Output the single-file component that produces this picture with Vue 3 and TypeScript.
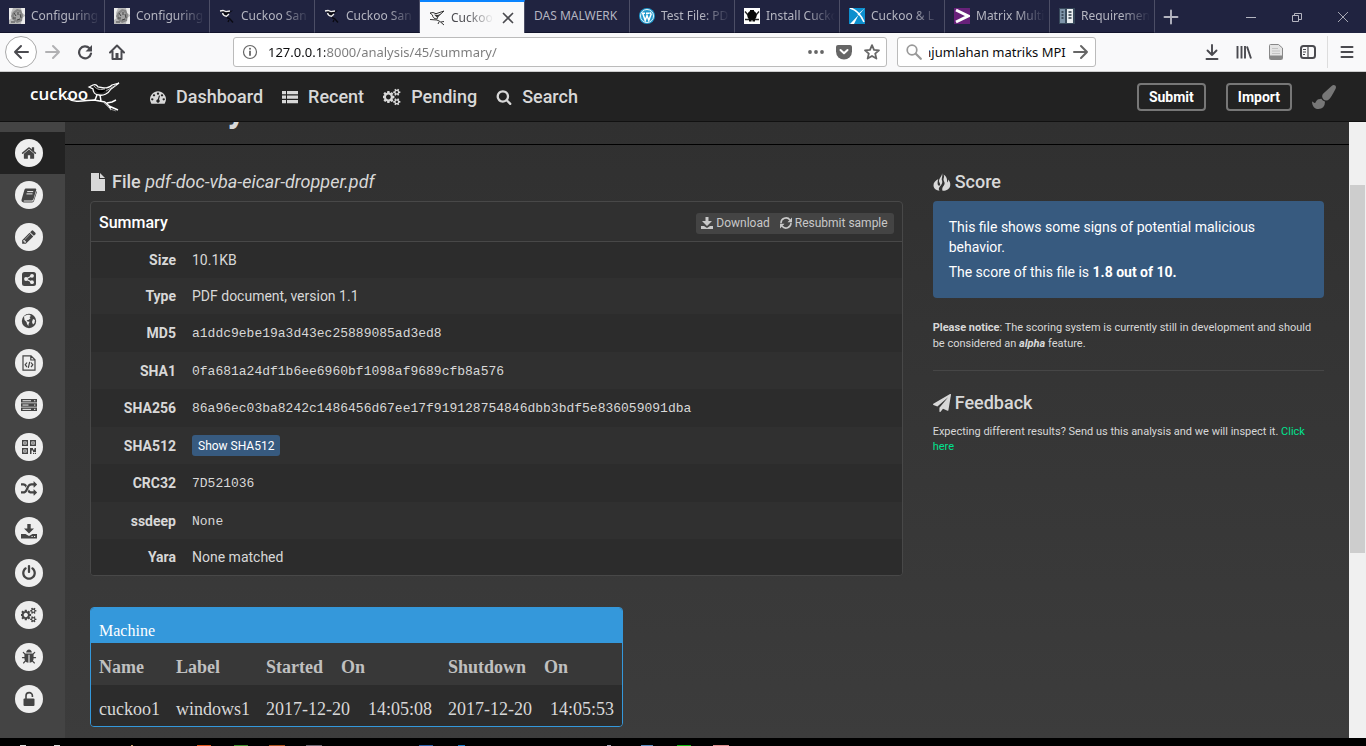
<script setup lang="ts">
import { h, onMounted, ref } from 'vue'

interface Glyph { box: string; body: string }

const fa = (d: string, box = '0 0 1792 1792'): Glyph => ({ box, body: `<path d="${d}"/>` })
const art = (body: string, box = '0 0 16 16'): Glyph => ({ box, body })

const cogs = 'M832 896q0-106-75-181t-181-75-181 75-75 181 75 181 181 75 181-75 75-181zm768 512q0-52-38-90t-90-38-90 38-38 90q0 53 37.5 90.5t90.5 37.5 90.5-37.5 37.5-90.5zm0-1024q0-52-38-90t-90-38-90 38-38 90q0 53 37.5 90.5t90.5 37.5 90.5-37.5 37.5-90.5zm-384 421v185q0 10-7 19.5t-16 10.5l-155 24q-11 35-32 76 34 48 90 115 7 11 7 20 0 12-7 19-23 30-82.5 89.5t-78.5 59.5q-11 0-21-7l-115-90q-37 19-77 31-11 108-23 155-7 24-30 24h-186q-11 0-20-7.5t-10-17.5l-23-153q-34-10-75-31l-118 89q-7 7-20 7-11 0-21-8-144-133-144-160 0-9 7-19 10-14 41-53t47-61q-23-44-35-82l-152-24q-10-1-17-9.5t-7-19.5v-185q0-10 7-19.5t16-10.5l155-24q11-35 32-76-34-48-90-115-7-11-7-20 0-12 7-20 22-30 82-89t79-59q11 0 21 7l115 90q34-18 77-32 11-108 23-154 7-24 30-24h186q11 0 20 7.5t10 17.5l23 153q34 10 75 31l118-89q8-7 20-7 11 0 21 8 144 133 144 160 0 8-7 19-12 16-42 54t-45 60q23 48 34 82l152 23q10 2 17 10.5t7 19.5zm640 533v140q0 16-149 31-12 27-30 52 51 113 51 138 0 4-4 7-122 71-124 71-8 0-46-47t-52-68q-20 2-30 2t-30-2q-14 21-52 68t-46 47q-2 0-124-71-4-3-4-7 0-25 51-138-18-25-30-52-149-15-149-31v-140q0-16 149-31 13-29 30-52-51-113-51-138 0-4 4-7 4-2 35-20t59-34 30-16q8 0 46 46.5t52 67.5q20-2 30-2t30 2q51-71 92-112l6-2q4 0 124 70 4 3 4 7 0 25-51 138 17 23 30 52 149 15 149 31zm0-1024v140q0 16-149 31-12 27-30 52 51 113 51 138 0 4-4 7-122 71-124 71-8 0-46-47t-52-68q-20 2-30 2t-30-2q-14 21-52 68t-46 47q-2 0-124-71-4-3-4-7 0-25 51-138-18-25-30-52-149-15-149-31v-140q0-16 149-31 13-29 30-52-51-113-51-138 0-4 4-7 4-2 35-20t59-34 30-16q8 0 46 46.5t52 67.5q20-2 30-2t30 2q51-71 92-112l6-2q4 0 124 70 4 3 4 7 0 25-51 138 17 23 30 52 149 15 149 31z'

const glyphs: Record<string, Glyph> = {
  home: fa('M1472 992v480q0 26-19 45t-45 19h-384v-384h-256v384h-384q-26 0-45-19t-19-45v-480q0-1 .5-3t.5-3l575-474 575 474q1 2 1 6zm223-69l-62 74q-8 9-21 11h-3q-13 0-21-7l-692-577-692 577q-12 8-24 7-13-2-21-11l-62-74q-8-10-7-23.5t11-21.5l719-599q32-26 76-26t76 26l244 204v-195q0-14 9-23t23-9h192q14 0 23 9t9 23v408l219 182q10 8 11 21.5t-7 23.5z'),
  book: art('<path d="M5.2 1.5H14c1 0 1.500.6 1.200 1.500l-2.700 9c-.3.900-1 1.500-2 1.500H3.200c-.7 0-.9.900-.2.900h8.100c.8 0 1.200-.3 1.400-1L15.500 4c.5.400.500 1 .3 1.600l-2.700 8.200c-.3 1-1 1.600-2 1.600H2.600C1 15.400.2 14 .6 12.600L3.300 3.200C3.600 2.200 4.200 1.500 5.200 1.500z"/><path d="M6.200 4.600h6M5.500 6.900h6" stroke="#eee" stroke-width="1"/>'),
  pencil: fa('M491 1536l91-91-235-235-91 91v107h128v128h107zm523-928q0-22-22-22-10 0-17 7l-542 542q-7 7-7 17 0 22 22 22 10 0 17-7l542-542q7-7 7-17zm-54-192l416 416-832 832h-416v-416zm683 96q0 53-37 90l-166 166-416-416 166-165q36-38 90-38 53 0 91 38l235 234q37 39 37 91z'),
  share: art('<rect x="1" y="1" width="14" height="14" rx="2.500"/><path d="M11 4.700L5 8l6 3.300" stroke="#eee" stroke-width="1.200" fill="none"/><circle cx="11" cy="4.800" r="1.900" fill="#eee"/><circle cx="5" cy="8" r="1.900" fill="#eee"/><circle cx="11" cy="11.200" r="1.900" fill="#eee"/>'),
  globe: art('<circle cx="8" cy="8" r="7.200"/><path d="M3 3.500C4.500 2 6.500 1.500 8.500 1.700L10 3 8.500 4l1 1.200L7.500 7 5.600 7.200l1 1.300 2 .3-1 2.200L7.400 13 6 11 5.500 9 3.500 7z" fill="#eee"/><path d="M12 6l2 1-.5 3L12 11.500 11 9z" fill="#eee"/>'),
  code: art('<path d="M2 .8h8L14 4.800v10.400H2zM9.800 1v4H14M6 7.500L4.200 9.800 6 12M10 7.500l1.800 2.300L10 12M8.700 6.800l-1.400 6" fill="none" stroke="currentColor" stroke-width="1.200"/>'),
  server: art('<path d="M0 2h16v3.500H0zM0 6.300h16v3.500H0zM0 10.600h16v3.500H0z"/><path d="M1.500 3.750H10M1.500 8.050h6M1.500 12.350H10M13 3.750h1.400M13 8.050h1.400M13 12.350h1.400" stroke="#eee" stroke-width="1"/>'),
  qr: art('<path d="M1.700 1.700h4.600v4.600H1.700zM9.700 1.700h4.600v4.600H9.700zM1.700 9.700h4.600v4.600H1.700z" fill="none" stroke="currentColor" stroke-width="1.400"/><path d="M3.300 3.300h1.400v1.400H3.300zM11.300 3.300h1.400v1.400h-1.400zM3.300 11.300h1.400v1.400H3.300zM9 9h3v1.500h1.500V9H15v4h-3v-1.500h-1.500V15H9zM12 13.700h1.200V15H12zM13.900 13.700H15V15h-1.100z"/>'),
  random: fa('M666 481q-60 92-137 273-22-45-37-72.5t-40.500-63.500-51-56.500-63-35-81.500-14.500h-224q-14 0-23-9t-9-23v-192q0-14 9-23t23-9h224q250 0 410 225zm1126 799q0 14-9 23l-320 320q-9 9-23 9-13 0-22.500-9.500t-9.500-22.500v-192q-32 0-85 .5t-81 1-73-1-71-5-64-10.500-63-18.500-58-28.500-59-40-55-53.500-56-69.500q59-93 136-273 22 45 37 72.500t40.500 63.500 51 56.500 63 35 81.500 14.500h256v-192q0-14 9-23t23-9q12 0 24 10l319 319q9 9 9 23zm0-896q0 14-9 23l-320 320q-9 9-23 9-13 0-22.500-9.500t-9.500-22.500v-192h-256q-48 0-87 15t-69 45-51 61.500-45 77.500q-32 62-78 171-29 66-49.500 111t-54 105-64 100-74 83-90 68.500-106.500 42-128 16.500h-224q-14 0-23-9t-9-23v-192q0-14 9-23t23-9h224q48 0 87-15t69-45 51-61.500 45-77.500q32-62 78-171 29-66 49.500-111t54-105 64-100 74-83 90-68.500 106.500-42 128-16.500h256v-192q0-14 9-23t23-9q12 0 24 10l319 319q9 9 9 23z'),
  tray: art('<path d="M6.300 1h3.400v4.500h3.300L8 10.500 3 5.500h3.300zM0 11h4.500L8 13l3.500-2H16v4.500H0z"/><path d="M10.500 13.500h1.200M13 13.500h1.200" stroke="#eee" stroke-width="1"/>'),
  power: fa('M1664 896q0 156-61 298t-164 245-245 164-298 61-298-61-245-164-164-245-61-298q0-182 80.500-343t226.500-270q43-32 95.500-25t83.500 50q32 42 24.500 94.500t-49.500 84.500q-98 74-151.500 181t-53.500 228q0 104 40.500 198.500t109.500 163.500 163.500 109.500 198.500 40.500 198.500-40.500 163.500-109.500 109.500-163.500 40.500-198.500q0-121-53.500-228t-151.500-181q-42-32-49.500-84.500t24.500-94.500q31-43 84-50t95 25q146 109 226.500 270t80.500 343zm-640-768v640q0 52-38 90t-90 38-90-38-38-90v-640q0-52 38-90t90-38 90 38 38 90z'),
  cogs: fa(cogs, '0 0 1920 1792'),
  bug: fa('M1696 960q0 26-19 45t-45 19h-224q0 171-67 290l208 209q19 19 19 45t-19 45q-18 19-45 19t-45-19l-198-197q-5 5-15 13t-42 28.500-65 36.500-82 29-97 13v-896h-128v896q-51 0-101.500-13.500t-87-33-66-39-43.500-32.500l-15-14-183 207q-20 21-48 21-24 0-43-16-19-18-20.500-44.500t15.500-46.500l202-227q-58-114-58-274h-224q-26 0-45-19t-19-45 19-45 45-19h224v-294l-173-173q-19-19-19-45t19-45 45-19 45 19l173 173h844l173-173q19-19 45-19t45 19 19 45-19 45l-173 173v294h224q26 0 45 19t19 45zm-480-576h-640q0-133 93.500-226.500t226.500-93.500 226.500 93.500 93.500 226.500z'),
  unlock: art('<rect x="2.500" y="7.500" width="11" height="7.500" rx="1"/><path d="M5 8V4.800a3.200 3.200 0 0 1 6.400 0V6" fill="none" stroke="currentColor" stroke-width="1.600"/>'),
  dashboard: fa('M384 1152q0-53-37.500-90.500t-90.500-37.500-90.500 37.500-37.500 90.500 37.500 90.500 90.500 37.500 90.500-37.500 37.500-90.500zm192-448q0-53-37.500-90.500t-90.500-37.500-90.500 37.500-37.500 90.500 37.500 90.500 90.500 37.500 90.500-37.500 37.500-90.500zm428 481l101-382q6-26-7.500-48.500t-38.500-29.500-48 6.500-30 39.500l-101 382q-60 5-107 43.500t-63 98.500q-20 77 20 146t117 89 146-20 89-117q16-60-6-117t-72-91zm660-33q0-53-37.500-90.500t-90.500-37.500-90.500 37.500-37.500 90.500 37.500 90.500 90.500 37.500 90.500-37.500 37.500-90.500zm-640-640q0-53-37.500-90.500t-90.500-37.500-90.500 37.500-37.500 90.500 37.500 90.500 90.500 37.500 90.500-37.500 37.500-90.500zm448 192q0-53-37.500-90.500t-90.500-37.500-90.500 37.500-37.500 90.500 37.500 90.500 90.500 37.500 90.500-37.500 37.500-90.500zm320 448q0 261-141 483-19 29-54 29h-1402q-35 0-54-29-141-221-141-483 0-182 71-348t191-286 286-191 348-71 348 71 286 191 191 286 71 348z'),
  list: art('<path d="M0 2h4v3.200H0zM5 2h11v3.200H5zM0 6.500h4v3.200H0zM5 6.500h11v3.200H5zM0 11h4v3.200H0zM5 11h11v3.200H5z"/>'),
  search: fa('M1216 832q0-185-131.500-316.500t-316.500-131.500-316.500 131.500-131.500 316.500 131.500 316.500 316.500 131.500 316.500-131.500 131.500-316.500zm512 832q0 52-38 90t-90 38q-54 0-90-38l-343-342q-179 124-399 124-143 0-273.500-55.500t-225-150-150-225-55.500-273.500 55.500-273.500 150-225 225-150 273.500-55.500 273.500 55.500 225 150 150 225 55.500 273.500q0 220-124 399l343 343q37 37 37 90z'),
  brush: fa('M1615 0q70 0 122.500 46.500t52.500 116.500q0 63-45 151-332 629-465 752-97 91-218 91-126 0-216.500-92.500t-90.500-219.500q0-128 92-212l638-579q59-54 130-54zm-909 1034q39 76 106.500 130t150.500 76l1 71q4 213-129.500 347t-348.500 134q-123 0-218-46.500t-152.500-127.500-86.500-183-29-220q7 5 41 30t62 44.500 59 36.500 46 17q41 0 55-37 25-66 57.500-112.500t69.500-76 88-47.500 103-25.500 125-10.500z'),
  file: art('<path d="M0 0h8v6h6v12H0z"/><path d="M9 0l5 5H9z"/>', '0 0 14 18'),
  fire: art('<path d="M8.500 0C9 3 5.500 5 5.500 8c0 1.500 1.200 2.300 1.200 3.600 0 .9-.7 1.400-1.400 1.100C4 12.200 4 10.500 4.200 8.500c.1-1 .3-1.800.6-2.500C2 7.500 0 9.500 0 12.200 0 15.500 3 17.500 6 17.700c-1.300-1.700-.6-3.200.8-4.800 1.500-1.700 2.600-3.300 1.700-5.400C7.700 5.500 9.500 3.500 8.500 0z"/><path d="M10 1.500c1.500 2.500-.6 4.200.3 6.200.7 1.500 1.500 3-.1 5-1.500 1.800-1.800 3.300-1.200 5 3.500.3 7-1.500 7.700-5 .6-3-1-4.500-1.900-6.200-.1 1.400-.4 2.400-1.300 3C14 6.500 13 3 10 1.500z"/>', '0 0 17 18'),
  plane: fa('M1764 11q33 24 27 64l-256 1536q-5 29-32 45-14 8-31 8-11 0-24-5l-453-185-242 295q-18 23-49 23-13 0-22-4-19-7-30.500-23.500t-11.500-36.500v-349l864-1059-1069 925-395-162q-37-14-40-55-2-40 32-59l1664-960q15-9 32-9 20 0 36 11z'),
  save: art('<path d="M4.500 0h3v4H11L6 9 1 4h3.500zM0 9h3l3 2 3-2h3v3H0z"/>', '0 0 12 12'),
  refresh: art('<path d="M1 6.200A5 5 0 0 1 10 3M11 5.800A5 5 0 0 1 2 9" fill="none" stroke="currentColor" stroke-width="1.600"/><path d="M12 .5v4.700H7.500zM0 11.500V6.800h4.500z"/>', '0 0 12 12'),
  back: art('<path d="M15 8H2M8 2L2 8l6 6" fill="none" stroke="currentColor" stroke-width="2" stroke-linecap="round" stroke-linejoin="round"/>'),
  forward: art('<path d="M1 8h13M8 2l6 6-6 6" fill="none" stroke="currentColor" stroke-width="2" stroke-linecap="round" stroke-linejoin="round"/>'),
  reload: art('<path d="M12.500 4.200A6 6 0 1 0 14 9.500" fill="none" stroke="currentColor" stroke-width="2.200" stroke-linecap="round"/><path d="M15 1v6.500H8.500z"/>'),
  house: art('<path d="M1 8.500L8 1.500l7 7M3.500 7v8h9V7" fill="none" stroke="currentColor" stroke-width="2" stroke-linecap="round" stroke-linejoin="round"/><path d="M6.500 9h3v6h-3z"/>'),
  info: art('<circle cx="8" cy="8" r="6.500" fill="none" stroke="currentColor" stroke-width="1.200"/><circle cx="8" cy="4.800" r="1"/><path d="M7.100 6.800h1.800v5H7.100z"/>'),
  dots: art('<circle cx="2" cy="8" r="1.900"/><circle cx="8" cy="8" r="1.900"/><circle cx="14" cy="8" r="1.900"/>'),
  pocket: art('<path d="M2 1h12a2 2 0 0 1 2 2v4.500a8 8 0 0 1-16 0V3a2 2 0 0 1 2-2z"/><path d="M4.500 6L8 9.300 11.500 6" fill="none" stroke="#fff" stroke-width="2" stroke-linecap="round" stroke-linejoin="round"/>'),
  star: art('<path d="M8 1.200l2 4.700 5 .4-3.800 3.300 1.200 5L8 12l-4.400 2.600 1.200-5L1 6.300l5-.4z" fill="none" stroke="currentColor" stroke-width="1.800" stroke-linejoin="round"/>'),
  lens: art('<circle cx="6" cy="6" r="4.800" fill="none" stroke="currentColor" stroke-width="1.700"/><path d="M9.800 9.800l5 5" stroke="currentColor" stroke-width="2.200" stroke-linecap="round"/>'),
  fetch: art('<path d="M8 1v10M3.500 6.500L8 11l4.500-4.500M2.500 15h11" fill="none" stroke="currentColor" stroke-width="1.900" stroke-linecap="round" stroke-linejoin="round"/>'),
  library: art('<path d="M1.500 2v12.500M5.500 2v12.500M9 2v12.500M11 2.500l4 12" fill="none" stroke="currentColor" stroke-width="1.900"/>'),
  notes: art('<path d="M1.500 1.500a1 1 0 0 1 1-1h8L14.500 4v10.500a1 1 0 0 1-1 1h-11a1 1 0 0 1-1-1z" fill="#e4e4e4" stroke="#888"/><path d="M2 11.500h12V15H2z" fill="#888"/><path d="M4 4.500h6M4 7h8M4 9.500h8" stroke="#c4c4c4"/>'),
  sidebar: art('<rect x="1" y="2" width="14" height="12" rx="2.500" fill="none" stroke="currentColor" stroke-width="2"/><path d="M8 2v12M3 5.500h3M3 8h3M3 10.500h2" stroke="currentColor" stroke-width="1.200"/>'),
  menu: art('<path d="M2.500 3h11M2.500 8h11M2.500 13h11" stroke="currentColor" stroke-width="2" stroke-linecap="round"/>'),
  close: art('<path d="M3.500 3.500l9 9M12.500 3.500l-9 9" stroke="currentColor" stroke-width="1.700" stroke-linecap="round"/>'),
  plus: art('<path d="M8 1.500v13M1.500 8h13" stroke="currentColor" stroke-width="1.900" stroke-linecap="round"/>'),
  minimize: art('<path d="M3 8.500h10" stroke="currentColor"/>'),
  restore: art('<path d="M3.500 6.500h6v6h-6zM5.500 6V4.500h7v6H10" fill="none" stroke="currentColor"/>'),
  exit: art('<path d="M3 3l10 10M13 3L3 13" stroke="currentColor" stroke-width=".9"/>'),
  photo: art('<rect width="16" height="16" fill="#b9b9b9"/><path d="M0 0h4l-2 5 1 5-3 2zM12 0h4v7l-3-2zM13 10l3-2v8h-4z" fill="#ececec"/><path d="M4 4l4-3 4 1 2 5-1 6-5 2-5-4-1-3z" fill="#858585"/><path d="M5 6l4-3 3 3 0 4-4 2-3-2z" fill="#a2a2a2"/><path d="M5 5l2 3M9 4v3M11 6l1 4M4 10h3M8 12l3-1M2 14h4" stroke="#444" stroke-width="1"/>'),
  birdNight: art('<path d="M1 3l3-.5 3 1.200L14 2.500 9 6 8 9C5 8.500 3.500 6.500 3.500 4.500z" fill="#0a0a12"/><path d="M1 3l3-.5 3 1.200 4-.7M3.500 5c.5 2 2 3 4 3.300L10 6" fill="none" stroke="#eee" stroke-width="1.300"/><path d="M8 9.500l3 1.500 3 3.500M10 12l-1 2" fill="none" stroke="#0a0a12" stroke-width="1.400"/>'),
  birdDay: art('<path d="M1 3l3-.5 3 1.200L15 1 9 6.500 8 9C5 9 3.500 7 3.500 5zM1 9.500l7 .5 3 1.500 4 3.500M10 12l-1 2M12 12l3-.5" fill="none" stroke="#333" stroke-width="1"/><path d="M5 4.500l4 .5 3-1.500-4 4z" fill="#333"/>'),
  wordpress: art('<circle cx="8" cy="8" r="8" fill="#2199cc"/><circle cx="8" cy="8" r="6.500" fill="none" stroke="#e8f5fb" stroke-width="1"/><path d="M3 5.200h3M7 5.200h3.500M3.800 5.400l2.400 7L8 7.500 9.800 12.400l2.300-6.200-1-1.800" fill="none" stroke="#fff" stroke-width="1.500"/>'),
  turtle: art('<rect width="16" height="16" fill="#fff"/><path d="M1 3.500l3 3.500M15 3.500l-3 3.500M1 11.500h4M15 11.500h-4" stroke="#222" stroke-width="1.300"/><ellipse cx="8" cy="7.500" rx="4.700" ry="4.800" fill="#080808"/><path d="M6 2h4v2H6zM5 11h2.500v2.500H5zM8.500 11H11v2.500H8.500z" fill="#080808"/>'),
  swoosh: art('<rect width="16" height="16" fill="#0c8fce"/><path d="M1 0c7 2 11 7 14 14" fill="none" stroke="#fff" stroke-width="1.600"/><path d="M15.500 .5L9.500 7.500 8.500 6.500zM9.500 7L1 16h4z" fill="#fff"/>'),
  chevron: art('<rect width="16" height="16" fill="#68217a"/><path d="M2 2l12 6-12 6" fill="none" stroke="#fff" stroke-width="3"/>'),
  docs: art('<rect width="16" height="16" fill="#394a5c"/><path d="M1 1h5v14H1z" fill="#7d93a8"/><path d="M8 1h6v14H8z" fill="#e9edf0"/><path d="M2.500 4h2M2.500 7h2M2.500 10h2M9.500 4h3M9.500 7h3M9.500 10h3" stroke="#283644" stroke-width="1.300"/>'),
}

const Icon = (props: { name: string }) => {
  const glyph = glyphs[props.name]
  return h('svg', { viewBox: glyph.box, fill: 'currentColor', 'aria-hidden': 'true', innerHTML: glyph.body })
}
Icon.props = ['name']

const tabs = [
  { icon: 'photo', title: 'Configuring' },
  { icon: 'photo', title: 'Configuring' },
  { icon: 'birdNight', title: 'Cuckoo San' },
  { icon: 'birdNight', title: 'Cuckoo San' },
  { icon: 'birdDay', title: 'Cuckoo', active: true },
  { icon: '', title: 'DAS MALWERK' },
  { icon: 'wordpress', title: 'Test File: PD' },
  { icon: 'turtle', title: 'Install Cucko' },
  { icon: 'swoosh', title: 'Cuckoo & L' },
  { icon: 'chevron', title: 'Matrix Multi' },
  { icon: 'docs', title: 'Requiremen' },
]

const sections = [
  ['home', 'Summary'], ['book', 'Static analysis'], ['pencil', 'Extracted artifacts'], ['share', 'Behavior'],
  ['globe', 'Network'], ['code', 'Dropped files'], ['server', 'Dropped buffers'], ['qr', 'Process memory'],
  ['random', 'Compare'], ['tray', 'Export'], ['power', 'Reboot'], ['cogs', 'Options'], ['bug', 'Feedback'], ['unlock', 'Lock sidebar'],
]

const nav = [
  ['dashboard', 'Dashboard'], ['list', 'Recent'], ['cogs', 'Pending'], ['search', 'Search'],
]

const facts = [
  { label: 'Size', value: '10.1KB', kind: 'text' },
  { label: 'Type', value: 'PDF document, version 1.1', kind: 'text' },
  { label: 'MD5', value: 'a1ddc9ebe19a3d43ec25889085ad3ed8', kind: 'code' },
  { label: 'SHA1', value: '0fa681a24df1b6ee6960bf1098af9689cfb8a576', kind: 'code' },
  { label: 'SHA256', value: '86a96ec03ba8242c1486456d67ee17f919128754846dbb3bdf5e836059091dba', kind: 'code' },
  { label: 'SHA512', value: 'Show SHA512', kind: 'button' },
  { label: 'CRC32', value: '7D521036', kind: 'code' },
  { label: 'ssdeep', value: 'None', kind: 'code' },
  { label: 'Yara', value: 'None matched', kind: 'text' },
]

const address = ref('127.0.0.1:8000/analysis/45/summary/')
const query = ref('penjumlahan matriks MPI')
const queryBox = ref<HTMLInputElement | null>(null)

onMounted(() => {
  if (queryBox.value) queryBox.value.scrollLeft = queryBox.value.scrollWidth
})
</script>

<template>
  <div class="window">
    <div class="tabstrip">
      <button v-for="(tab, i) in tabs" :key="i" class="tab" :class="{ active: tab.active }" type="button">
        <Icon v-if="tab.icon" :name="tab.icon" class="favicon" />
        <span class="tab-title" :class="{ fade: tab.icon }">{{ tab.title }}</span>
        <Icon v-if="tab.active" name="close" class="tab-close" />
      </button>
      <button class="new-tab" type="button" aria-label="New tab"><Icon name="plus" class="i16" /></button>
      <div class="window-buttons">
        <button type="button" aria-label="Minimize"><Icon name="minimize" class="i16" /></button>
        <button type="button" aria-label="Restore"><Icon name="restore" class="i16" /></button>
        <button type="button" aria-label="Close"><Icon name="exit" class="i16" /></button>
      </div>
    </div>

    <div class="toolbar">
      <div class="history">
        <button class="round" type="button" aria-label="Back"><Icon name="back" class="i16" /></button>
        <button class="dim" type="button" aria-label="Forward"><Icon name="forward" class="i16" /></button>
        <button type="button" aria-label="Reload"><Icon name="reload" class="i16" /></button>
        <button type="button" aria-label="Home"><Icon name="house" class="i16" /></button>
      </div>
      <div class="field address">
        <Icon name="info" class="i16" />
        <input v-model="address" type="text" aria-label="Address" spellcheck="false">
        <Icon name="dots" class="i16" />
        <Icon name="pocket" class="i16" />
        <Icon name="star" class="i16" />
      </div>
      <div class="field query">
        <Icon name="lens" class="i16 lens" />
        <input ref="queryBox" v-model="query" type="text" aria-label="Web search" spellcheck="false">
        <Icon name="forward" class="i16" />
      </div>
      <div class="tools">
        <button type="button" aria-label="Downloads"><Icon name="fetch" class="i16" /></button>
        <button type="button" aria-label="Library"><Icon name="library" class="i16" /></button>
        <button type="button" aria-label="Notes"><Icon name="notes" class="i16" /></button>
        <button type="button" aria-label="Sidebars"><Icon name="sidebar" class="i16" /></button>
        <button class="menu" type="button" aria-label="Menu"><Icon name="menu" class="i16" /></button>
      </div>
    </div>

    <header class="site-header">
      <a class="brand" href="#">
        <span>cuckoo</span>
        <svg class="bird" viewBox="0 0 54 30" fill="none" stroke="#fff" aria-hidden="true">
          <path d="M23 5l4-2c2-1 4 0 5 2l6 1c3 0 6-1 8-3l7-2-8 6c-3 5-8 7-12 6-4 0-6-3-6-6z" stroke-width="1.300" />
          <path d="M28 6c3 3 8 3 12 1l-3 3c-3 1-7 0-9-4z" fill="#000" stroke="#000" />
          <path d="M28 4c3 4 7 4 11 3M40 9l10-6" stroke="#aaa" />
          <path d="M1 16c8 6 19 2 27 2l11 2M31 13l-2 5M34 13l1 6M39 20l4 4 9 4M41 21l5-1 4-2M43 24l2 4" stroke-width="1.500" />
          <path d="M38 21l6 6 6 2" stroke="#888" />
        </svg>
      </a>
      <nav>
        <a v-for="[icon, label] in nav" :key="label" href="#"><Icon :name="icon" :class="icon === 'cogs' ? 'i18' : 'i16'" />{{ label }}</a>
      </nav>
      <div class="actions">
        <button type="button">Submit</button>
        <button type="button">Import</button>
        <button class="theme" type="button" aria-label="Theme"><Icon name="brush" class="i24" /></button>
      </div>
    </header>

    <div class="body">
      <aside>
        <a v-for="([icon, label], i) in sections" :key="label" href="#" :class="{ current: i === 0 }" :aria-label="label">
          <span class="dot"><Icon :name="icon" class="i16" /></span>
        </a>
      </aside>

      <main>
        <div class="page-title"><h1>Summary</h1></div>
        <div class="columns">
          <section>
            <h2><Icon name="file" class="i18 doc" /><span>File <em>pdf-doc-vba-eicar-dropper.pdf</em></span></h2>
            <div class="panel">
              <div class="panel-head">
                <h3>Summary</h3>
                <div class="panel-actions">
                  <a href="#"><Icon name="save" class="i12" />Download</a>
                  <a href="#"><Icon name="refresh" class="i12" />Resubmit sample</a>
                </div>
              </div>
              <table class="facts">
                <tbody>
                  <tr v-for="fact in facts" :key="fact.label" :class="fact.kind">
                    <th scope="row">{{ fact.label }}</th>
                    <td>
                      <button v-if="fact.kind === 'button'" type="button">{{ fact.value }}</button>
                      <code v-else-if="fact.kind === 'code'">{{ fact.value }}</code>
                      <template v-else>{{ fact.value }}</template>
                    </td>
                  </tr>
                </tbody>
              </table>
            </div>

            <div class="machine">
              <div class="machine-head">Machine</div>
              <table>
                <thead>
                  <tr>
                    <th>Name</th>
                    <th>Label</th>
                    <th><span class="pair"><span>Started</span><span>On</span></span></th>
                    <th><span class="pair"><span>Shutdown</span><span>On</span></span></th>
                  </tr>
                </thead>
                <tbody>
                  <tr>
                    <td>cuckoo1</td>
                    <td>windows1</td>
                    <td><span class="pair"><span>2017-12-20</span><span>14:05:08</span></span></td>
                    <td><span class="pair"><span>2017-12-20</span><span>14:05:53</span></span></td>
                  </tr>
                </tbody>
              </table>
            </div>
          </section>

          <section>
            <h2><Icon name="fire" class="i18" />Score</h2>
            <div class="score">
              <p>This file shows some signs of potential malicious behavior.</p>
              <p>The score of this file is <strong>1.8 out of 10.</strong></p>
            </div>
            <p class="notice"><strong>Please notice</strong>: The scoring system is currently still in development and should be considered an <strong><em>alpha</em></strong> feature.</p>
            <hr>
            <h2><Icon name="plane" class="i18" />Feedback</h2>
            <p class="feedback">Expecting different results? Send us this analysis and we will inspect it. <a href="#">Click here</a></p>
          </section>
        </div>
      </main>

      <div class="scrollbar"><div class="thumb"></div></div>
    </div>

    <div class="taskbar">
      <svg width="1366" height="1" viewBox="0 0 1366 1" aria-hidden="true">
        <path d="M20 0h6v1h-6zM54 0h6v1h-6z" fill="#ddd" />
        <path d="M131 0h2v1h-2z" fill="#c9a26a" />
        <path d="M197 0h14v1h-14z" fill="#e0561c" />
        <path d="M234 0h14v1h-14z" fill="#3f8f2f" />
        <path d="M269 0h16v1h-16z" fill="#a9501c" />
        <path d="M306 0h16v1h-16z" fill="#6d6670" />
        <path d="M419 0h14v1h-14z" fill="#2a5fa8" />
        <path d="M458 0h7v1h-7z" fill="#1379c4" />
        <path d="M607 0h4v1h-4z" fill="#aab" />
        <path d="M641 0h12v1h-12z" fill="#5b8cc0" />
        <path d="M677 0h14v1h-14z" fill="#10b810" />
        <path d="M713 0h16v1h-16z" fill="#dd8f8f" />
      </svg>
    </div>
  </div>
</template>

<style>
body {
  margin: 0;
}
</style>

<style scoped>
* {
  box-sizing: border-box;
}

.window {
  display: flex;
  flex-direction: column;
  height: 100vh;
  overflow: hidden;
  font: 14px/20px Roboto, "Liberation Sans", sans-serif;
  color: #d8d8d8;
  background: #000;
}

button {
  display: flex;
  align-items: center;
  justify-content: center;
  padding: 0;
  border: 0;
  background: none;
  color: inherit;
  font: inherit;
}

a {
  color: inherit;
  text-decoration: none;
}

svg {
  flex: none;
}

.i12 { width: 12px; height: 12px; }
.i16 { width: 16px; height: 16px; }
.i18 { width: 18px; height: 18px; }
.i24 { width: 24px; height: 24px; }

/* Browser tabs */
.tabstrip {
  display: flex;
  flex: none;
  height: 33px;
  background: #202340;
  color: #b4b5c0;
  font: 12px/16px "Noto Sans", "Open Sans", sans-serif;
}

.tab {
  flex: 0 1 105px;
  min-width: 0;
  justify-content: flex-start;
  gap: 6px;
  padding: 0 4px 0 9px;
  border-right: 1px solid #4c4e66;
  border-bottom: 1px solid #12142c;
}

.tab.active {
  padding-right: 8px;
  border-top: 2px solid #0a84ff;
  border-bottom: 0;
  background: #f9f9fa;
  color: #4a4a4f;
}

.favicon {
  width: 16px;
  height: 16px;
}

.tab-title {
  flex: 1;
  min-width: 0;
  overflow: hidden;
  white-space: nowrap;
  text-align: left;
}

.tab-title.fade {
  mask-image: linear-gradient(to left, transparent, #000 28px);
}

.tab-close {
  width: 16px;
  height: 16px;
}

.new-tab {
  width: 32px;
}

.window-buttons {
  display: flex;
  margin-left: auto;
}

.window-buttons button {
  width: 46px;
}

/* Browser toolbar */
.toolbar {
  display: flex;
  flex: none;
  align-items: center;
  height: 39px;
  padding: 0 7px 0 5px;
  border-bottom: 1px solid #ccc;
  background: #f9f9fa;
  color: #4a4a4f;
  font: 13px/20px "Noto Sans", "Open Sans", sans-serif;
}

.history,
.tools {
  display: flex;
  align-items: center;
}

.history button,
.tools button {
  width: 32px;
  height: 32px;
}

.history .round {
  border: 1px solid #aaa;
  border-radius: 50%;
  background: #fff;
}

.history .dim {
  color: #b1b1b3;
}

.field {
  display: flex;
  align-items: center;
  height: 30px;
  border: 1px solid #bbb;
  border-radius: 3px;
  background: #fff;
  color: #666;
}

.field input {
  flex: 1;
  min-width: 0;
  padding: 0;
  border: 0;
  outline: 0;
  background: none;
  color: #0c0c0d;
  font: inherit;
}

.address {
  flex: 1;
  gap: 12px;
  margin-left: 100px;
  padding: 0 6px 0 8px;
}

.address input {
  margin-left: -2px;
  background: linear-gradient(90deg, #0c0c0d 57px, #7a7a7a 57px);
  background-clip: text;
  -webkit-text-fill-color: transparent;
}

.query {
  gap: 7px;
  width: 199px;
  margin-left: 10px;
  padding: 0 6px 0 8px;
}

.lens {
  color: #999;
}

.tools {
  margin-left: 100px;
}

.tools .menu {
  width: 32px;
  margin-left: 3px;
  border-left: 1px solid #ddd;
  padding-left: 7px;
}

/* Site header */
.site-header {
  display: flex;
  flex: none;
  align-items: center;
  height: 50px;
  padding: 0 30px;
  border-bottom: 1px solid #111;
  background: #222;
}

.brand {
  display: flex;
  align-items: center;
  width: 90px;
  color: #fff;
  font: 17px/22px "Open Sans", Roboto, sans-serif;
  font-weight: 600;
}

.brand span {
  padding-bottom: 5px;
}

.bird {
  width: 54px;
  height: 30px;
  margin-left: -22px;
}

nav {
  display: flex;
  gap: 19px;
  margin-left: 30px;
  font-size: 18px;
  font-weight: 500;
}

nav a {
  display: flex;
  align-items: center;
  gap: 10px;
}

.actions {
  display: flex;
  align-items: center;
  gap: 20px;
  margin-left: auto;
}

.actions button {
  height: 28px;
  padding: 0 10px;
  border: 2px solid #777;
  border-radius: 4px;
  color: #fff;
  font-weight: 700;
}

.actions .theme {
  padding: 0;
  border: 0;
  color: #777;
}

/* Page body */
.body {
  display: flex;
  flex: 1;
  min-height: 0;
}

aside {
  flex: none;
  width: 65px;
  padding-top: 10px;
  background: #444;
}

aside a {
  display: flex;
  align-items: center;
  height: 42px;
  padding-left: 15px;
}

aside .current {
  background: #222;
}

.dot {
  display: flex;
  align-items: center;
  justify-content: center;
  width: 28px;
  height: 28px;
  border-radius: 50%;
  background: #eee;
  color: #444;
}

main {
  flex: 1;
  min-width: 0;
  overflow: hidden;
  background: linear-gradient(#303030, #3c3c3c);
}

.page-title {
  display: flex;
  align-items: flex-end;
  height: 23px;
  padding: 0 25px 17px;
  overflow: hidden;
  border-bottom: 1px solid #000;
}

h1 {
  margin: 0;
  font-size: 36px;
  line-height: 36px;
  font-weight: 700;
}

.columns {
  display: grid;
  grid-template-columns: 2fr 1fr;
  padding: 0 10px;
}

section {
  min-width: 0;
  padding: 25px 15px 0;
}

h2 {
  display: flex;
  align-items: center;
  gap: 4px;
  margin: 0 0 8px;
  font-size: 18px;
  line-height: 23px;
  font-weight: 500;
}

h2 em {
  font-weight: 400;
}

.doc {
  width: 16px;
  margin-right: 2px;
}

.panel {
  border: 1px solid #484848;
  border-radius: 4px;
  background: #303030;
  overflow: hidden;
}

.panel-head {
  display: flex;
  align-items: center;
  justify-content: space-between;
  height: 40px;
  padding: 3px 8px 0;
  border-bottom: 1px solid #484848;
}

h3 {
  margin: 0;
  color: #fff;
  font-size: 16px;
  font-weight: 500;
}

.panel-actions {
  display: flex;
  gap: 10px;
  padding: 0 6px 0 5px;
  border-radius: 3px;
  background: #444;
  color: #c8c8c8;
  font-size: 12px;
  line-height: 21px;
}

.panel-actions a {
  display: flex;
  align-items: center;
  gap: 3px;
}

table {
  width: 100%;
  border-collapse: collapse;
}

.facts tr {
  height: 37px;
}

.facts tr:nth-child(odd) {
  height: 38px;
  background: #2c2c2c;
}

.facts tr.text {
  height: 36px;
}

.facts th {
  width: 93px;
  padding: 0 8px;
  text-align: right;
  font-weight: 700;
}

.facts td {
  padding: 0 8px;
}

code {
  font: 13px/20px "Courier New", "Liberation Mono", monospace;
}

.facts button {
  height: 21px;
  padding: 0 6px;
  border-radius: 3px;
  background: #375a7f;
  color: #fff;
  font-size: 12px;
}

.machine {
  width: max-content;
  margin-top: 31px;
  border: 1px solid #3498db;
  border-radius: 4px;
  overflow: hidden;
  font: 18px/20px "Liberation Serif", "Times New Roman", serif;
}

.machine-head {
  height: 35px;
  padding: 13px 8px 0;
  background: #3498db;
  color: #fff;
  font-size: 16px;
}

.machine th {
  height: 42px;
  padding: 6px 8px 0;
  background: #383838;
  color: #c0c0c0;
  text-align: left;
}

.machine td {
  height: 41px;
  padding: 7px 8px 0;
  background: #2c2c2c;
}

.pair {
  display: flex;
  gap: 18px;
}

.score {
  padding: 16px;
  border-radius: 4px;
  background: #375a7f;
  color: #fff;
}

.score p {
  margin: 0 0 5px;
}

.score p:last-child {
  margin: 0;
}

.notice,
.feedback {
  margin: 0;
  font-size: 11px;
  line-height: 16px;
}

.notice {
  margin-top: 22px;
}

hr {
  margin: 18px 0 20px;
  border: 0;
  border-top: 1px solid #464646;
}

.feedback {
  margin-top: 10px;
  line-height: 15px;
}

.feedback a {
  color: #00e28f;
}

.scrollbar {
  display: flex;
  flex: none;
  flex-direction: column;
  width: 17px;
  padding: 0 1px;
  background: #f0f0f0;
}

.scrollbar::before {
  flex: 63;
  content: "";
}

.thumb {
  flex: 368;
  background: #cdcdcd;
}

.scrollbar::after {
  flex: 185;
  content: "";
}

.taskbar {
  display: flex;
  flex: none;
  align-items: flex-end;
  height: 8px;
  overflow: hidden;
  background: #000;
}
</style>
